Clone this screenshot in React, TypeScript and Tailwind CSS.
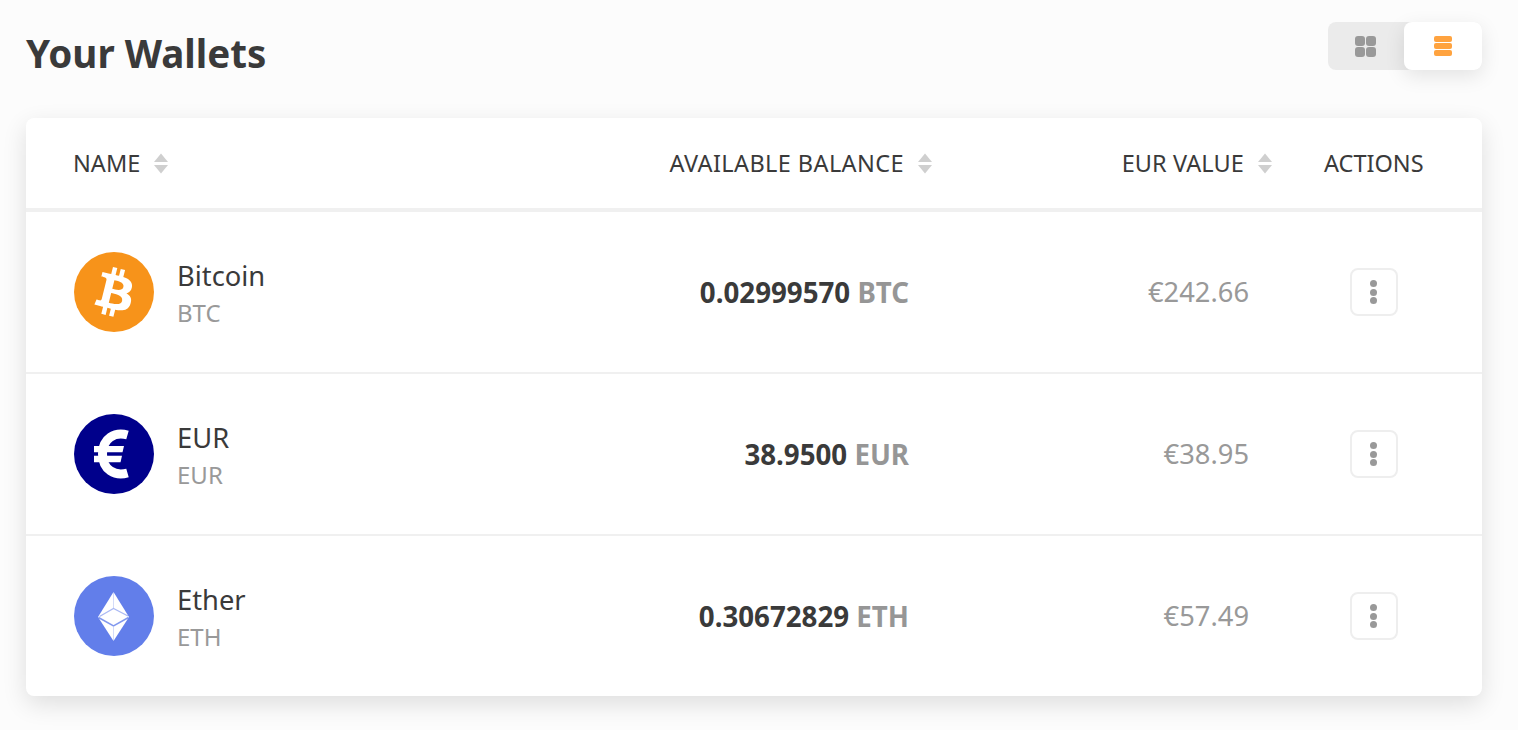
import React from "react";

const font = { fontFamily: '"Noto Sans", sans-serif' };

function Sort() {
  return (
    <svg width="14" height="22" viewBox="0 0 14 22" className="ml-[14px] shrink-0">
      <path d="M7 0.5 L14 9 L0 9 Z" fill="#cfcfcf" />
      <path d="M0 12 L14 12 L7 20.5 Z" fill="#cfcfcf" />
    </svg>
  );
}

function BtcIcon() {
  return (
    <svg viewBox="0 0 32 32" className="w-20 h-20 shrink-0">
      <circle cx="16" cy="16" r="16" fill="#F7931A" />
      <path
        fill="#FFF"
        d="M23.189 14.02c.314-2.096-1.283-3.223-3.465-3.975l.708-2.84-1.728-.43-.69 2.765c-.454-.114-.92-.22-1.385-.326l.695-2.783L15.596 6l-.708 2.839c-.376-.086-.746-.17-1.104-.26l.002-.009-2.384-.595-.46 1.846s1.283.294 1.256.312c.7.175.826.638.805 1.006l-.806 3.235c.048.012.11.03.18.057l-.183-.045-1.13 4.532c-.086.212-.303.531-.793.41.018.025-1.256-.313-1.256-.313l-.858 1.978 2.25.561c.418.105.828.215 1.231.318l-.715 2.872 1.727.43.708-2.84c.472.127.93.245 1.378.357l-.706 2.828 1.728.43.715-2.866c2.948.558 5.164.333 6.097-2.333.752-2.146-.037-3.385-1.588-4.192 1.13-.26 1.98-1.003 2.207-2.538zm-3.95 5.538c-.533 2.147-4.148.986-5.32.695l.95-3.805c1.172.293 4.929.872 4.37 3.11zm.535-5.569c-.487 1.953-3.495.96-4.47.717l.86-3.45c.975.243 4.118.696 3.61 2.733z"
      />
    </svg>
  );
}

function EurIcon() {
  return (
    <svg viewBox="0 0 80 80" className="w-20 h-20 shrink-0">
      <circle cx="40" cy="40" r="40" fill="#00008B" />
      <path d="M53.5 21 C41 17.5 28.5 24 28.5 40 C28.5 56 41 62.5 53.5 59" fill="none" stroke="#fff" strokeWidth="9" />
      <path d="M20 32 H50 L48.5 38.3 H20 Z M20 41.7 H48 L46.5 48.3 H20 Z" fill="#fff" />
    </svg>
  );
}

function EthIcon() {
  return (
    <svg viewBox="0 0 80 80" className="w-20 h-20 shrink-0">
      <circle cx="40" cy="40" r="40" fill="#627EEA" />
      <path d="M39.5 16 L55 41 L39.5 65 L24 41 Z" fill="#fff" />
      <path d="M39.5 16 L39.5 32" fill="none" stroke="#627EEA" strokeWidth="0.8" opacity="0.35" />
      <path d="M25.5 40.5 L39.5 32.5 L54 40" fill="none" stroke="#627EEA" strokeWidth="1.2" opacity="0.55" />
      <path d="M24.5 41.5 L39.5 50 L54.5 41.5" fill="none" stroke="#627EEA" strokeWidth="1.5" opacity="0.8" />
      <path d="M39.5 51 L39.5 65" fill="none" stroke="#627EEA" strokeWidth="0.8" opacity="0.35" />
    </svg>
  );
}

function Row({
  icon, name, code, amount, value, border,
}: { icon: React.ReactNode; name: string; code: string; amount: string; value: string; border: boolean }) {
  return (
    <div className={`flex items-center pl-12 ${border ? "h-[162px] border-b-2 border-[#f0f0f0]" : "h-[160px]"}`}>
      <div className="flex items-center flex-1 gap-[23px]">
        {icon}
        <div className="pt-1">
          <div className="text-[27.3px] leading-[38px] text-[#3a3a3a]">{name}</div>
          <div className="text-[24px] leading-[36px] text-[#999]">{code}</div>
        </div>
      </div>
      <div className="w-[400px] text-right text-[27.7px] font-bold text-[#3a3a3a] pr-[23px] whitespace-nowrap pt-px">
        {amount} <span className="text-[#969696]">{code}</span>
      </div>
      <div className="w-[340px] text-right text-[27.3px] text-[#999] pr-[23px]">{value}</div>
      <div className="w-[210px] flex pl-[78px]">
        <button className="w-[48px] h-[48px] pr-[2px] rounded-lg border-2 border-[#eeeeee] bg-white flex flex-col items-center justify-center gap-[1.5px]">
          <span className="w-[7px] h-[7px] rounded-full bg-[#999]" />
          <span className="w-[7px] h-[7px] rounded-full bg-[#999]" />
          <span className="w-[7px] h-[7px] rounded-full bg-[#999]" />
        </button>
      </div>
    </div>
  );
}

export default function App() {
  return (
    <div className="w-[1518px] h-[730px] bg-[#fcfcfc] overflow-hidden pl-[26px] pr-[36px]" style={font}>
      <div className="flex justify-between h-[118px] pt-[22px]">
        <h1 className="text-[38.6px] font-bold text-[#3a3a3a] leading-[63px]">Your Wallets</h1>
        <div className="flex h-12 w-[154px] rounded-lg bg-[#ebebeb]">
          <div className="w-[76px] pr-px flex items-center justify-center">
            <div className="grid grid-cols-2 gap-[1px] w-[21px]">
              <span className="h-[10px] rounded-[3px] bg-[#999]" />
              <span className="h-[10px] rounded-[3px] bg-[#999]" />
              <span className="h-[10px] rounded-[3px] bg-[#999]" />
              <span className="h-[10px] rounded-[3px] bg-[#999]" />
            </div>
          </div>
          <div className="w-[78px] pr-px pb-px rounded-lg bg-white shadow-[0_6px_20px_rgba(0,0,0,0.1)] flex flex-col items-center justify-center gap-[1px]">
            <span className="w-[18px] h-[6px] rounded-[2px] bg-[#ffa33f]" />
            <span className="w-[18px] h-[6px] rounded-[2px] bg-[#ffa33f]" />
            <span className="w-[18px] h-[6px] rounded-[2px] bg-[#ffa33f]" />
          </div>
        </div>
      </div>
      <div className="bg-white rounded-lg shadow-[0_8px_24px_rgba(0,0,0,0.12)]">
        <div className="flex items-center h-[94px] pl-12 pt-[1px] border-b-4 border-[#f0f0f0] text-[23.5px] text-[#3a3a3a]">
          <div className="flex items-center flex-1 -ml-px">NAME<Sort /></div>
          <div className="w-[400px] flex items-center justify-end tracking-[0.4px]">AVAILABLE BALANCE<Sort /></div>
          <div className="w-[340px] flex items-center justify-end tracking-[0.1px]">EUR VALUE<Sort /></div>
          <div className="w-[210px] pl-[52px]">ACTIONS</div>
        </div>
        <Row icon={<BtcIcon />} name="Bitcoin" code="BTC" amount="0.02999570" value="€242.66" border />
        <Row icon={<EurIcon />} name="EUR" code="EUR" amount="38.9500" value="€38.95" border />
        <Row icon={<EthIcon />} name="Ether" code="ETH" amount="0.30672829" value="€57.49" border={false} />
      </div>
    </div>
  );
}
